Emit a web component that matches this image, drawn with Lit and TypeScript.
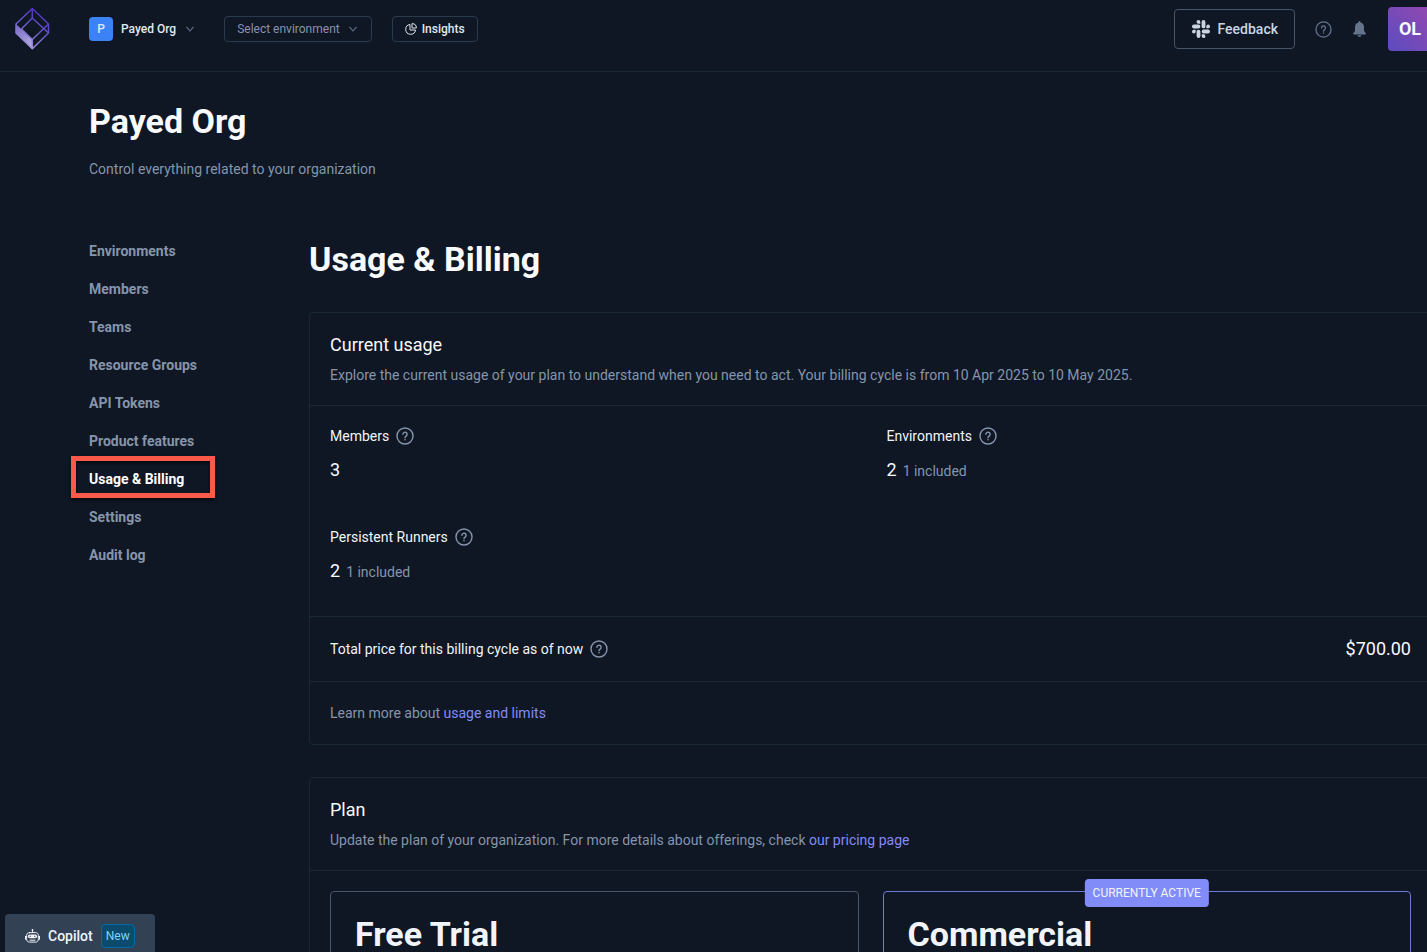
import { LitElement, html, css, svg } from "lit";
import { customElement } from "lit/decorators.js";

const helpIcon = (size: number) => html`<svg width=${size} height=${size} viewBox="0 0 18 18" fill="none" stroke="currentColor" stroke-width="1.4" aria-hidden="true">
  <circle cx="9" cy="9" r="8"/>
  <path d="M6.900 7.300a2.100 2.100 0 1 1 3.200 1.800c-.8.500-1.100.8-1.100 1.700" stroke-linecap="round"/>
  <circle cx="9" cy="12.800" r=".8" fill="currentColor" stroke="none"/>
</svg>`;

const chevron = html`<svg class="chevron" width="8" height="6" viewBox="0 0 8 6" fill="none" stroke="currentColor" stroke-width="1.1" aria-hidden="true"><path d="M.5 .8 4 5 7.500 .8"/></svg>`;

const logo = html`<svg width="36" height="44" viewBox="0 0 36 44" fill="none" aria-hidden="true">
  <defs>
    <linearGradient id="edge" x1="28" y1="4" x2="8" y2="40" gradientUnits="userSpaceOnUse">
      <stop offset="0" stop-color="#4a2fc4"/><stop offset=".5" stop-color="#6b58c8"/><stop offset="1" stop-color="#a79edb"/>
    </linearGradient>
    <linearGradient id="face" x1="1" y1="17" x2="17" y2="42" gradientUnits="userSpaceOnUse">
      <stop offset="0" stop-color="#7567c6"/><stop offset="1" stop-color="#b9b2e0"/>
    </linearGradient>
  </defs>
  <path d="M1 17 17.300 32.500V42L1 26Z" fill="url(#face)"/>
  <path d="M17.300 1.500 33.500 17V26L17.300 41.800 1 26V17ZM17.300 1.500V11M6.500 22 17.300 11 33.500 26M33.500 17 17.300 32.500 6.500 22M17.300 32.500V41.500" stroke="url(#edge)" stroke-width="1.500" stroke-linejoin="round"/>
</svg>`;

const pie = html`<svg width="12" height="12" viewBox="0 0 12 12" fill="none" stroke="currentColor" stroke-width="1" aria-hidden="true">
  <path d="M5 1.500A4.900 4.900 0 1 0 10.500 7H5Z"/><path d="M7 .6V5h4.400A4.500 4.500 0 0 0 7 .6Z"/>
</svg>`;

const slack = html`<svg width="18" height="18" viewBox="0 0 18 18" fill="currentColor" aria-hidden="true">
  ${[0, 90, 180, 270].map((a) => svg`<g transform="rotate(${a} 9 9)"><path d="M6.400 0a1.850 1.850 0 0 0 0 3.700h1.900V1.900A1.900 1.900 0 0 0 6.400 0ZM6.400 4.600H1.900a1.900 1.900 0 0 0 0 3.800h4.500a1.900 1.900 0 0 0 0-3.800Z"/></g>`)}
</svg>`;

const bell = html`<svg width="13" height="16" viewBox="0 0 13 16" fill="currentColor" aria-hidden="true">
  <path d="M6.500 0c.6 0 1 .4 1 .9v.5c2.100.4 3.500 2.200 3.500 4.500v3.200c0 1.200.7 2.200 1.600 3 .5.500.2 1.300-.5 1.300H.9c-.7 0-1-.8-.5-1.300.9-.8 1.600-1.800 1.600-3V5.900c0-2.300 1.400-4.100 3.500-4.500V.9c0-.5.4-.9 1-.9ZM4.600 14.200h3.800a1.900 1.800 0 0 1-3.800 0Z"/>
</svg>`;

const robot = html`<svg width="15" height="14" viewBox="0 0 15 14" fill="none" stroke="currentColor" aria-hidden="true">
  <path d="M7.500 1v2.500M4.600 3.600h5.800c2 0 3 1.200 3 3v3.300c0 2-1 3.200-2.700 3.200H4.300c-1.700 0-2.700-1.200-2.700-3.200V6.600c0-1.800 1-3 3-3ZM5 11.200h5M.5 7.300v3M14.500 7.300v3" stroke-linecap="round"/>
  <rect x="2.900" y="5.400" width="9.200" height="3.800" rx="1.900" fill="currentColor" stroke="none"/>
  <path d="M4.600 7.700q.7-1 1.400 0M9 7.700q.7-1 1.400 0" stroke="#334155"/>
  <circle cx="7.500" cy="1" r=".9" fill="currentColor" stroke="none"/>
</svg>`;

const NAV = ["Environments", "Members", "Teams", "Resource Groups", "API Tokens", "Product features", "Usage & Billing", "Settings", "Audit log"];

const METRICS = [
  { label: "Members", value: 3, note: "" },
  { label: "Environments", value: 2, note: "1 included" },
  { label: "Persistent Runners", value: 2, note: "1 included" },
];

@customElement("app-root")
export class AppRoot extends LitElement {
  static styles = css`
    *, *::after { box-sizing: border-box; margin: 0; }
    :host {
      display: block; position: relative; height: 100vh; overflow: hidden;
      background: #0f1624; color: #f8fafc;
      font: 14px/20px Roboto, "Liberation Sans", sans-serif;
    }
    svg { display: block; flex: none; }
    button { font: inherit; color: inherit; background: none; border: 0; padding: 0; cursor: pointer; display: flex; align-items: center; }
    a { color: #818cf8; text-decoration: none; }
    .shell { width: calc(100% + 5px); }
    header { display: flex; align-items: flex-start; height: 72px; padding: 7px 0 0 15px; border-bottom: 1px solid #1a2736; }
    .logo { width: 74px; }
    .left, .right { display: flex; align-items: center; height: 44px; }
    .left { flex: 1; }
    .org { gap: 8px; font-size: 12px; font-weight: 500; color: #e2e8f0; }
    .org .chevron { margin-left: 2px; }
    .initial { width: 24px; height: 24px; border-radius: 4px; background: #3b82f6; font-size: 12px; line-height: 24px; text-align: center; }
    .chevron { color: #64748b; }
    .outlined { height: 26px; border: 1px solid #2b3b4e; border-radius: 4px; padding: 0 12px; font-size: 12px; }
    .env { margin-left: 30px; gap: 9px; padding-right: 14px; color: #8595ab; }
    .insights { margin-left: 20px; gap: 5px; font-weight: 500; color: #e2e8f0; }
    .feedback { height: 40px; border: 1px solid #475569; border-radius: 4px; padding: 0 16px 0 17px; gap: 8px; font-size: 14px; font-weight: 500; color: #cbd5e1; }
    .icon { color: #64748b; }
    .right .help { margin: 0 21px 0 20px; }
    .avatar { margin-left: 22px; width: 44px; height: 44px; border-radius: 4px; justify-content: center; font-size: 18px; font-weight: 700; background: linear-gradient(45deg, #5b4cc0, #9448b0); }
    .page { padding: 27px 0 0 89px; }
    h1, h2, h3 { font-size: 34px; line-height: 44px; font-weight: 700; }
    .muted { color: #8595ab; }
    .lead { margin-top: 16px; }
    .columns { display: flex; margin-top: 58px; }
    nav { flex: none; width: 220px; }
    nav ul { list-style: none; padding: 4px 0 0; display: grid; gap: 18px; justify-items: start; }
    nav a { position: relative; display: block; font-weight: 700; color: #8595ab; }
    nav a.active { color: #fff; }
    nav a.active::after { content: ""; position: absolute; left: -18px; top: -13px; width: 144px; height: 42px; border: 5px solid #fb5a4b; box-shadow: 0 2px 3px #0009, inset 0 2px 3px #0009; }
    main { flex: 1; min-width: 0; }
    .card { border: 1px solid #1a2736; border-radius: 4px; }
    .usage { margin: 31px 0 32px; }
    .card > * + * { border-top: 1px solid #1a2736; }
    .head { padding: 20px; }
    h4 { font-size: 18px; line-height: 24px; font-weight: 400; margin-bottom: 8px; }
    .metrics { display: grid; grid-template-columns: 1fr 1fr; gap: 45px 32px; padding: 20px 20px 33px; }
    .label { display: flex; align-items: center; gap: 7px; color: #f1f5f9; }
    .label .icon { color: #8595ab; }
    .value { display: flex; align-items: baseline; gap: 6px; margin-top: 13px; font-size: 18px; line-height: 22px; }
    .value .muted { font-size: 14px; }
    .total { display: flex; justify-content: space-between; align-items: center; height: 65px; padding: 0 20px; }
    .price { font-size: 18px; }
    .more { padding: 21px 20px; }
    .plans { display: grid; grid-template-columns: 1fr 1fr; gap: 24px; padding: 20px; }
    .plan { position: relative; min-height: 220px; padding: 20px 24px; border: 1px solid #475569; border-radius: 4px; }
    .plan.current { border-color: #6f79d8; }
    .plan h3 { color: #f1f5f9; }
    .badge { position: absolute; top: -13px; left: 50%; transform: translateX(-50%); padding: 4px 8px; border-radius: 4px; background: #818cf8; font-size: 12px; color: #f1f5f9; white-space: nowrap; }
    .copilot { position: absolute; left: 5px; bottom: 0; height: 38px; padding: 5px 20px 0; border-radius: 4px 4px 0 0; background: #334155; gap: 8px; font-size: 14px; font-weight: 500; color: #f1f5f9; }
    .new { border: 1px solid #0369a1; border-radius: 4px; background: #0c4a6e; color: #7dd3fc; font-size: 12px; font-weight: 400; line-height: 22px; padding: 0 4px; }
  `;

  render() {
    return html`
      <div class="shell">
        <header>
          <div class="left">
            <a class="logo" href="#" aria-label="Home">${logo}</a>
            <button class="org"><span class="initial">P</span>Payed Org ${chevron}</button>
            <button class="outlined env">Select environment ${chevron}</button>
            <button class="outlined insights">${pie}Insights</button>
          </div>
          <div class="right">
            <button class="feedback">${slack}Feedback</button>
            <button class="icon help" aria-label="Help">${helpIcon(17)}</button>
            <button class="icon" aria-label="Notifications">${bell}</button>
            <button class="avatar">OL</button>
          </div>
        </header>
        <div class="page">
          <h1>Payed Org</h1>
          <p class="muted lead">Control everything related to your organization</p>
          <div class="columns">
            <nav aria-label="Organization">
              <ul>${NAV.map((n) => html`<li><a href="#" class=${n === "Usage & Billing" ? "active" : ""}>${n}</a></li>`)}</ul>
            </nav>
            <main>
              <h2>Usage &amp; Billing</h2>
              <section class="card usage">
                <div class="head">
                  <h4>Current usage</h4>
                  <p class="muted">Explore the current usage of your plan to understand when you need to act. Your billing cycle is from 10 Apr 2025 to 10 May 2025.</p>
                </div>
                <div class="metrics">
                  ${METRICS.map((m) => html`<div>
                    <div class="label">${m.label}<button class="icon" aria-label="About ${m.label}">${helpIcon(18)}</button></div>
                    <div class="value">${m.value}<span class="muted">${m.note}</span></div>
                  </div>`)}
                </div>
                <div class="total">
                  <div class="label">Total price for this billing cycle as of now<button class="icon" aria-label="About the total price">${helpIcon(18)}</button></div>
                  <span class="price">$700.00</span>
                </div>
                <p class="muted more">Learn more about <a href="#">usage and limits</a></p>
              </section>
              <section class="card">
                <div class="head">
                  <h4>Plan</h4>
                  <p class="muted">Update the plan of your organization. For more details about offerings, check <a href="#">our pricing page</a></p>
                </div>
                <div class="plans">
                  <article class="plan"><h3>Free Trial</h3></article>
                  <article class="plan current"><span class="badge">CURRENTLY ACTIVE</span><h3>Commercial</h3></article>
                </div>
              </section>
            </main>
          </div>
        </div>
      </div>
      <button class="copilot">${robot}Copilot<span class="new">New</span></button>
    `;
  }
}
